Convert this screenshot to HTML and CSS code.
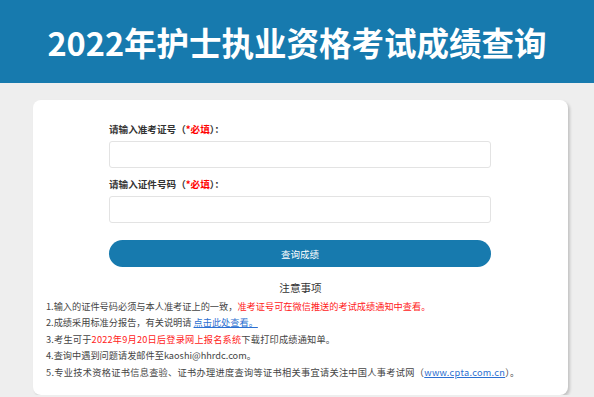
FILE: index.html
```html
<!DOCTYPE html>
<html lang="zh-CN">
<head>
<meta charset="utf-8">
<title>2022年护士执业资格考试成绩查询</title>
<link rel="stylesheet" href="styles.css">
</head>
<body>
<header class="top">
  <h1 class="title">2022年护士执业资格考试成绩查询</h1>
</header>
<main class="page">
  <section class="card">
    <form class="form">
      <label class="label">请输入准考证号（<span class="req">*必填</span>）：</label>
      <input class="field" type="text">
      <label class="label label-2">请输入证件号码（<span class="req">*必填</span>）：</label>
      <input class="field" type="text">
      <button class="btn" type="button">查询成绩</button>
    </form>
    <h2 class="notes-title">注意事项</h2>
    <div class="notes">
      <p class="line">1.输入的证件号码必须与本人准考证上的一致，<span class="red">准考证号可在微信推送的考试成绩通知中查看。</span></p>
      <p class="line">2.成绩采用标准分报告，有关说明请 <a class="link" href="#">点击此处查看。</a></p>
      <p class="line line-wide">3.考生可于<span class="red">2022年9月20日后登录网上报名系统</span>下载打印成绩通知单。</p>
      <p class="line">4.查询中遇到问题请发邮件至kaoshi@hhrdc.com。</p>
      <p class="line line-wider">5.专业技术资格证书信息查验、证书办理进度查询等证书相关事宜请关注中国人事考试网（<a class="link" href="#">www.cpta.com.cn</a>）。</p>
    </div>
  </section>
</main>
</body>
</html>
```

FILE: styles.css
```css
* { box-sizing: border-box; }
html, body {
  margin: 0;
  padding: 0;
  background: #eeeeee;
  font-family: "Noto Sans CJK SC", "Noto Sans", sans-serif;
  color: #333;
}
.top {
  height: 83px;
  background: #177aae;
  display: flex;
  align-items: center;
  justify-content: center;
}
.title {
  margin: 0;
  color: #fff;
  font-size: 32.5px;
  font-weight: 700;
  line-height: 1;
  padding-top: 2px;
}
.page {
  padding: 17px 0 0 33px;
}
.card {
  width: 535px;
  height: 295px;
  background: #fff;
  border-radius: 8px;
  box-shadow: 2px 2px 3px rgba(0, 0, 0, 0.18);
  padding: 22px 13px 0 13px;
}
.form {
  width: 382px;
  margin: 0 0 0 63px;
  display: flex;
  flex-direction: column;
}
.label {
  font-size: 9.6px;
  font-weight: 700;
  line-height: 15px;
  height: 15px;
  color: #333;
}
.label-2 { margin-top: 9px; }
.req { color: #ff0000; }
.field {
  margin-top: 4px;
  height: 27px;
  border: 1px solid #e3e3e3;
  border-radius: 3px;
  background: #fff;
  outline: none;
}
.btn {
  margin-top: 17px;
  height: 27px;
  border: none;
  border-radius: 14px;
  background: #177aae;
  color: #fff;
  font-family: "Noto Sans CJK SC", sans-serif;
  font-size: 9.5px;
  padding: 0;
}
.notes-title {
  margin: 13px 0 0 0;
  text-align: center;
  font-size: 10.6px;
  font-weight: 400;
  line-height: 16px;
  color: #333;
}
.notes {
  margin-top: 1.5px;
}
.line {
  margin: 0;
  font-size: 9.2px;
  line-height: 16.5px;
  color: #444;
  white-space: nowrap;
}
.line-wide { letter-spacing: 0.2px; }
.line-wider { letter-spacing: 0.3px; }
.red { color: #ff1a1a; }
.link {
  color: #2b6fd1;
  text-decoration: underline;
}
```
